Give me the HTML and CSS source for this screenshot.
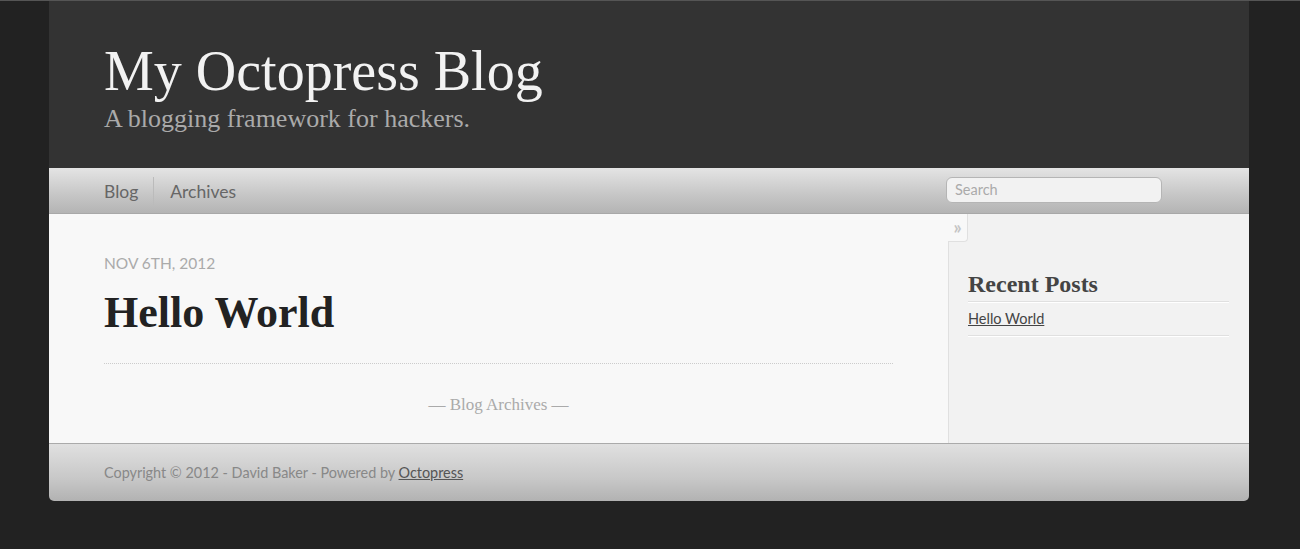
FILE: index.html
```html
<!DOCTYPE html>
<html>
<head>
<meta charset="utf-8">
<title>My Octopress Blog</title>
<link rel="stylesheet" href="styles.css">
</head>
<body>
<div class="page">
  <header class="site-header">
    <h1 class="site-title">My Octopress Blog</h1>
    <h2 class="site-subtitle">A blogging framework for hackers.</h2>
  </header>
  <nav class="site-nav">
    <ul class="nav-links">
      <li class="nav-item first">Blog</li>
      <li class="nav-item">Archives</li>
    </ul>
    <div class="search-box">Search</div>
  </nav>
  <div class="main">
    <div class="content">
      <article class="post">
        <div class="post-date">Nov 6th, 2012</div>
        <h1 class="post-title">Hello World</h1>
      </article>
      <div class="pager">— Blog Archives —</div>
    </div>
    <aside class="sidebar">
      <div class="toggle">»</div>
      <section class="widget">
        <h3 class="widget-title">Recent Posts</h3>
        <ul class="widget-list">
          <li class="widget-item"><a class="widget-link">Hello World</a></li>
        </ul>
      </section>
    </aside>
  </div>
  <footer class="site-footer">
    <p class="footer-text">Copyright © 2012 - David Baker - Powered by <a class="footer-link">Octopress</a></p>
  </footer>
</div>
</body>
</html>
```

FILE: styles.css
```css
html, body {
  margin: 0;
  padding: 0;
}
body {
  background: #222;
  border-top: 1px solid #555;
  height: 548px;
  overflow: hidden;
}
.page {
  width: 1200px;
  margin-left: 49px;
  display: flex;
  flex-direction: column;
}
.site-header {
  background: #333;
  height: 167px;
  box-sizing: border-box;
  padding: 39px 0 0 55px;
}
.site-title {
  margin: 0;
  font-family: "Liberation Serif", serif;
  font-weight: normal;
  font-size: 56px;
  line-height: 62px;
  color: #f2f2f2;
}
.site-subtitle {
  margin: 0;
  font-family: "Liberation Serif", serif;
  font-weight: normal;
  font-size: 26px;
  line-height: 34px;
  color: #aaa;
}
.site-nav {
  height: 46px;
  box-sizing: border-box;
  border-bottom: 1px solid #a8a8a8;
  background: linear-gradient(to bottom, #e4e4e4, #c6c6c6 60%, #b4b4b4);
  display: flex;
  align-items: center;
  padding: 0 0 0 55px;
}
.nav-links {
  list-style: none;
  margin: 0;
  padding: 2px 0 0;
  display: flex;
  flex: 1;
}
.nav-item {
  font-family: "Lato", sans-serif;
  font-size: 17.5px;
  color: #666;
  line-height: 30px;
  padding: 0 15px 0 16px;
  border-left: 1px solid #bbb;
}
.nav-item.first {
  padding-left: 0;
  border-left: none;
}
.search-box {
  width: 216px;
  height: 26px;
  box-sizing: border-box;
  margin-right: 87px;
  margin-top: -2px;
  border: 1px solid #b5b5b5;
  border-radius: 6px;
  background: #f2f2f2;
  font-family: "Lato", sans-serif;
  font-size: 14.5px;
  color: #aaa;
  padding: 3px 0 0 8px;
}
.main {
  display: flex;
  height: 229px;
  background: #f8f8f8;
}
.content {
  flex: 1;
  padding: 0 55px;
}
.post {
  border-bottom: 1px dotted #ccc;
  padding-top: 40px;
  height: 150px;
  box-sizing: border-box;
}
.post-date {
  font-family: "Lato", sans-serif;
  text-transform: uppercase;
  font-size: 15.5px;
  color: #aaa;
  line-height: 18px;
}
.post-title {
  margin: 16px 0 0;
  font-family: "Liberation Serif", serif;
  font-weight: bold;
  font-size: 44px;
  line-height: 50px;
  color: #222;
}
.pager {
  text-align: center;
  font-family: "Liberation Serif", serif;
  font-size: 17px;
  color: #aaa;
  margin-top: 31px;
}
.sidebar {
  width: 301px;
  background: #f2f2f2;
  position: relative;
  padding: 0 20px 0 19px;
  box-sizing: border-box;
  border-left: 1px solid #e0e0e0;
}
.toggle {
  position: absolute;
  left: -1px;
  top: 0;
  width: 20px;
  height: 28px;
  box-sizing: border-box;
  background: #f8f8f8;
  border-right: 1px solid #e0e0e0;
  border-bottom: 1px solid #e0e0e0;
  border-bottom-right-radius: 4px;
  color: #c4c4c4;
  font-family: "Lato", sans-serif;
  font-size: 18px;
  font-weight: bold;
  line-height: 26px;
  text-align: center;
}
.widget {
  padding-top: 54px;
}
.widget-title {
  margin: 0;
  font-family: "Liberation Serif", serif;
  font-weight: bold;
  font-size: 24px;
  line-height: 32px;
  color: #444;
  border-bottom: 1px solid #e0e0e0;
  box-shadow: 0 1px 0 #fff;
  padding-bottom: 1px;
}
.widget-list {
  list-style: none;
  margin: 0;
  padding: 0;
}
.widget-item {
  border-bottom: 1px solid #e0e0e0;
  box-shadow: 0 1px 0 #fff;
  line-height: 33px;
  font-family: "Lato", sans-serif;
  font-size: 14.5px;
}
.widget-link {
  color: #444;
  text-decoration: underline;
}
.site-footer {
  height: 58px;
  box-sizing: border-box;
  border-top: 1px solid #aaa;
  border-radius: 0 0 5px 5px;
  background: linear-gradient(to bottom, #e0e0e0, #c8c8c8 60%, #b2b2b2);
  padding: 0 55px;
  display: flex;
  align-items: center;
}
.footer-text {
  margin: 0;
  font-family: "Lato", sans-serif;
  font-size: 14.4px;
  color: #888;
}
.footer-link {
  color: #555;
  text-decoration: underline;
}
```
